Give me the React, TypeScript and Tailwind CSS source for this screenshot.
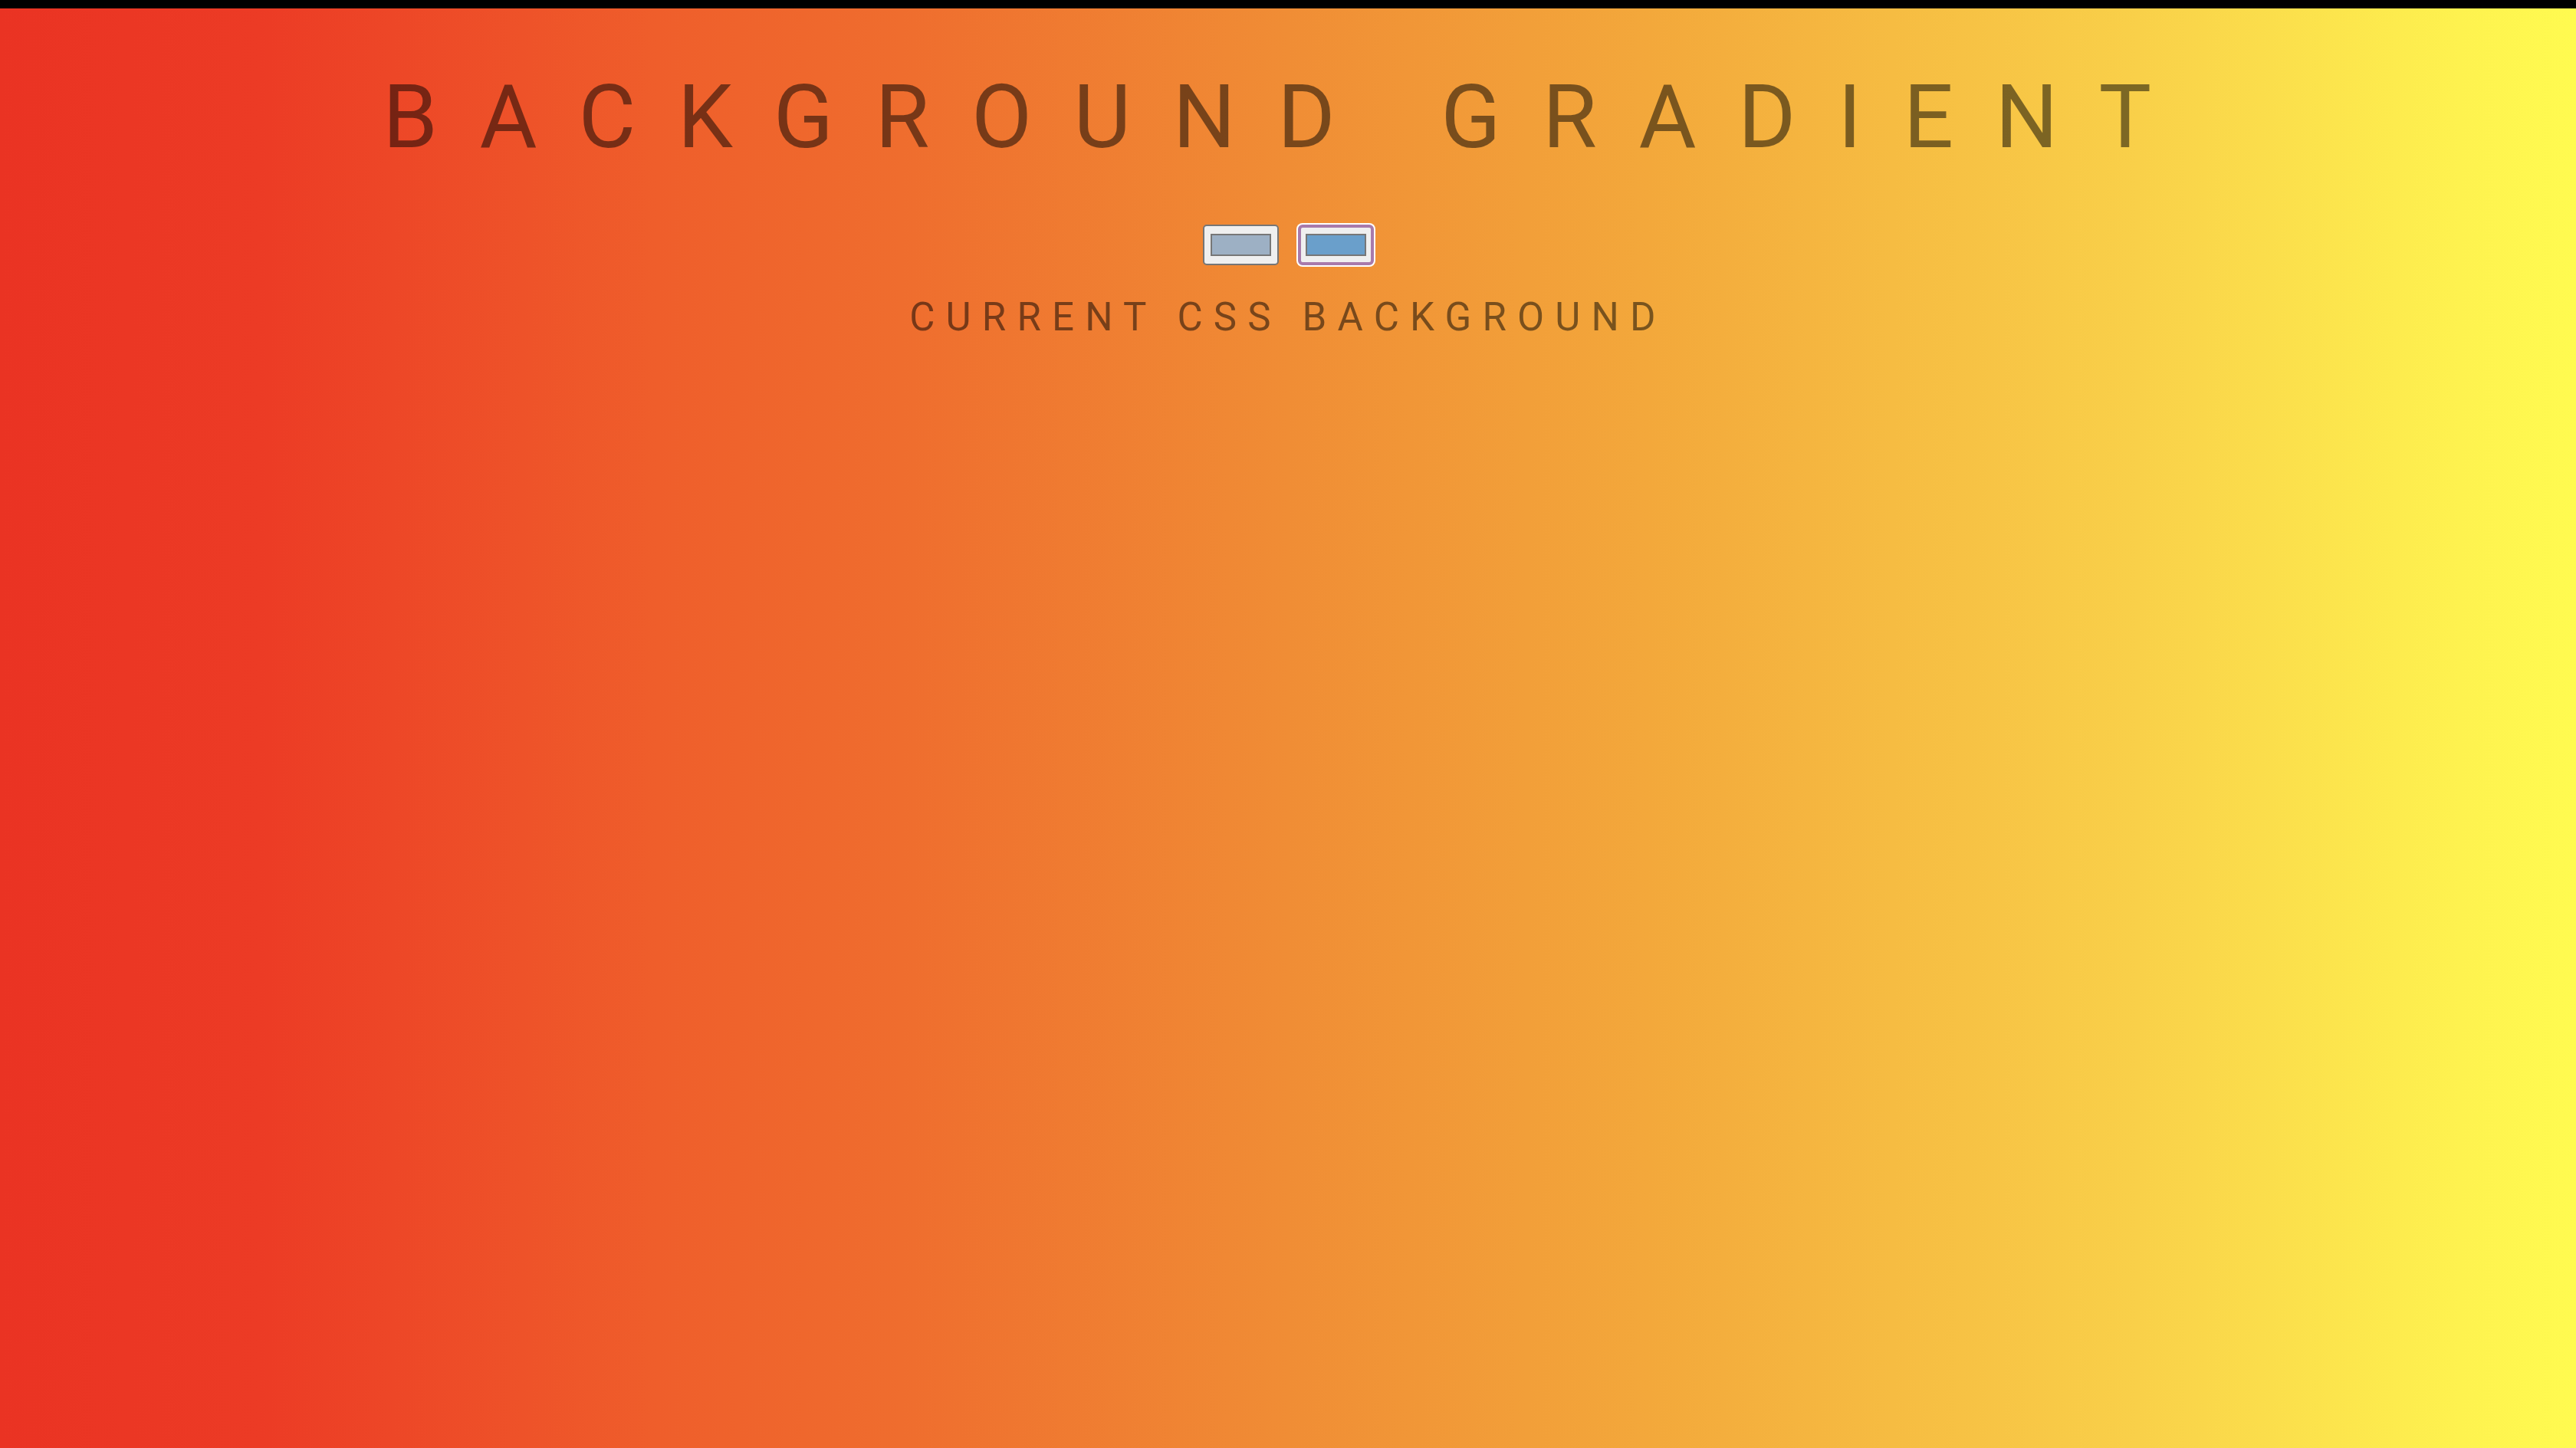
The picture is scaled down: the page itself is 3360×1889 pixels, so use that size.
const ColorSwatch = ({ color, focused }: { color: string; focused?: boolean }) => {
  return (
    <div
      className={
        focused
          ? "w-[99px] h-[53px] rounded-[6px] border-[4px] border-[#a87aab] bg-[#efefef] px-[6px] py-[8px] shadow-[0_0_0_2px_#ffffff]"
          : "w-[99px] h-[53px] rounded-[5px] border-2 border-[#767676] bg-[#efefef] px-[8px] py-[10px]"
      }
    >
      <div className="w-[79px] h-[29px] border-2 border-[#777777]" style={{ backgroundColor: color }} />
    </div>
  );
};

const App = () => {
  return (
    <div className="min-h-[1889px] w-full flex flex-col bg-[linear-gradient(to_right,#ea3323_0%,#ec3b25_10%,#ef5e2b_25.5%,#ef6d2e_35%,#f08d35_50%,#f3a83b_64%,#f9d049_83%,#fef24f_95.5%,#fffb50_100%)] font-['Roboto',sans-serif]">
      <div className="h-[11px] w-full bg-black" />

      <div className="flex flex-col items-center">
        <h1 className="mt-[84px] text-[115px] leading-none font-normal tracking-[0.474em] text-black/50 whitespace-nowrap">
          BACKGROUND GRADIENT
        </h1>

        <div className="mt-[83px] flex items-center gap-[25px]">
          <ColorSwatch color="#9db0c4" />
          <ColorSwatch color="#6a9fcb" focused />
        </div>

        <h3 className="mt-[42px] text-[51px] leading-none font-normal tracking-[0.278em] text-black/50 whitespace-nowrap">
          CURRENT CSS BACKGROUND
        </h3>
      </div>
    </div>
  );
};

export default App;
